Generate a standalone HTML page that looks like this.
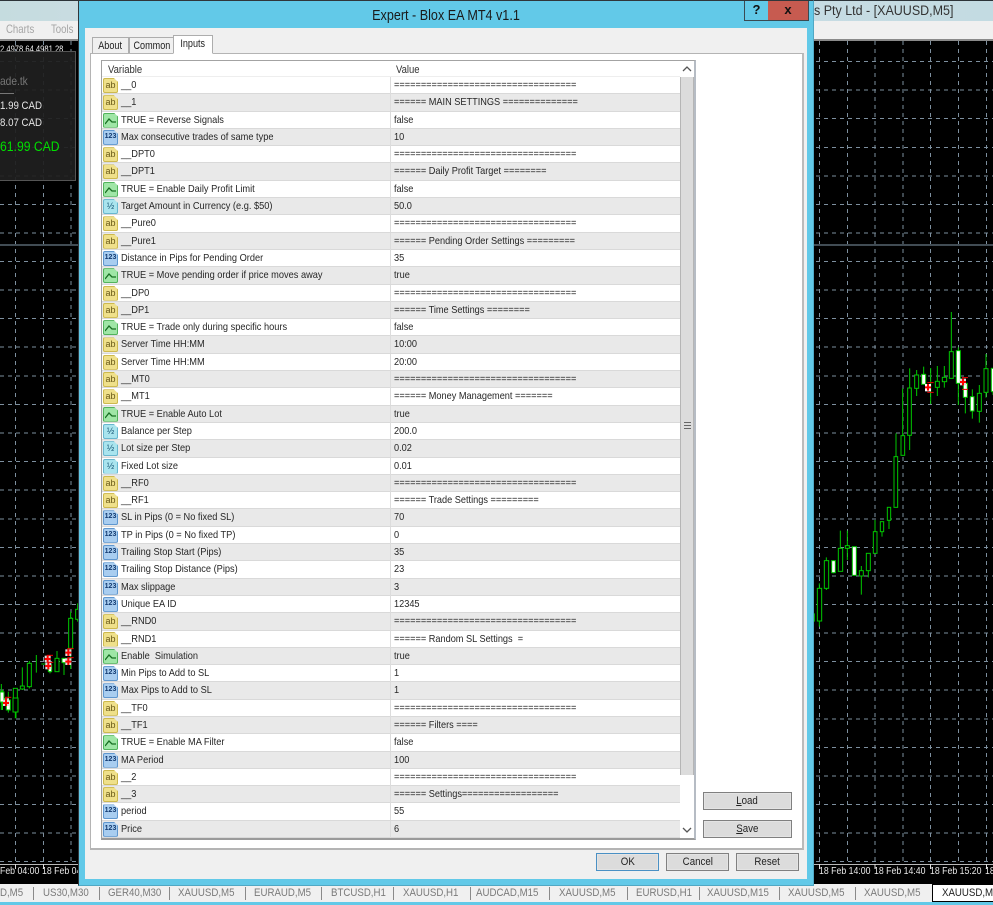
<!DOCTYPE html>
<html><head><meta charset="utf-8"><title>Expert - Blox EA MT4 v1.1</title>
<style>
*{box-sizing:border-box}
html,body{margin:0;padding:0}
body{width:993px;height:905px;position:relative;overflow:hidden;background:#000;font-family:"Liberation Sans",sans-serif;font-size:11px;color:#222}
.abs,.abs>*{position:absolute}
#bg{left:0;top:0}
#top{left:0;top:0;width:993px;height:21px;background:linear-gradient(90deg,#c5dcdf,#cfdde6 25%,#c3dbe2);border-top:1px solid #2c3338}
#menu{left:0;top:21px;width:993px;height:18px;background:#f0f0f0}
#ln{left:0;top:39px;width:993px;height:2px;background:#8a8a8a}
.tt{top:3px;left:814px;font-size:14.2px;color:#333;white-space:nowrap;transform:scaleX(.88);transform-origin:0 50%}
.mn{top:22px;font-size:12px;color:#a5a5a5;transform:scaleX(.8);transform-origin:0 50%}
#strip{left:0;top:884px;width:993px;height:18px;background:#f0f0f0}
#strip2{left:0;top:902px;width:993px;height:3px;background:#62c9e8}
.tb{top:886px;font-size:11.4px;line-height:14px;color:#7a7a7a;white-space:nowrap;transform:scaleX(.85);transform-origin:0 50%}
.sp{top:887px;width:1px;height:13px;background:#8a8a8a}
#act{left:932px;top:884px;width:61px;height:18px;background:#fff;border-left:1px solid #000;border-top:1px solid #000;border-bottom:1px solid #000;overflow:hidden;color:#222;font-size:11.4px;line-height:14px;padding:1px 0 0 9px;white-space:nowrap}
#act span{display:inline-block;transform:scaleX(.85);transform-origin:0 50%}
.ax{top:866px;font-size:10.4px;color:#e8e8e8;white-space:nowrap;transform:scaleX(.84);transform-origin:0 50%}
#hud{left:0;top:51px;width:76px;height:130px;background:rgba(31,31,31,.93);border:1px solid #555;border-left:0}
.h{white-space:nowrap;font-size:11.4px;color:#e6e6e6;left:0;transform:scaleX(.85);transform-origin:0 50%}
#dlg{left:78px;top:0;width:736px;height:886px;background:#62c9e8;border:1px solid #30363a;border-right:1px solid #50a8c4;border-bottom:1px solid #50a8c4}
#ttl{left:0;top:7px;width:734px;text-align:center;font-size:14.4px;color:#1a1a1a;transform:scaleX(.875)}
#help{left:665px;top:0;width:25px;height:20px;background:#62c9e8;border:1px solid #3a4a52;border-top:0;text-align:center;font:bold 13px/18px "Liberation Sans",sans-serif;color:#111}
#close{left:689px;top:0;width:41px;height:20px;background:#c75b50;border:1px solid #3a4a52;border-top:0;border-left:0;text-align:center;font:bold 13px/17px "Liberation Sans",sans-serif;color:#111}
#cl{left:6px;top:27px;width:722px;height:851px;background:#f0f0f0}
#pn{left:5px;top:25px;width:714px;height:797px;background:#fff;border:1px solid #b4b4b4;border-bottom:2px solid #b4b4b4;border-right:2px solid #bbb}
.tab{background:#f0f0f0;border:1px solid #adadad;border-bottom:0;text-align:center;font-size:10.8px;color:#222;line-height:16px}
.tab span{display:inline-block;transform:scaleX(.84)}
#lst{left:101px;top:60px;width:595px;height:780px;border:1px solid #a3a3a3;border-left:1px solid #a0a0a0;border-bottom:2px solid #9a9a9a;border-right:2px solid #b6bcc4;background:#fff;overflow:hidden}
#hd{height:16px;position:relative;font-size:10.8px;background:#fff;border-bottom:1px solid #eee;color:#333}
#hd span{position:absolute;top:3px;transform:scaleX(.88);transform-origin:0 50%}
.r{height:17.31px;position:relative;white-space:nowrap;font-size:10.45px;line-height:18px;color:#262626;border-bottom:1px solid #d9d9d9;width:579px}
.r:nth-child(even){background:#e9e9e9}
.r b{font-weight:400;position:absolute;left:19px;top:0;transform:scaleX(.885);transform-origin:0 50%}
.r u{text-decoration:none;position:absolute;left:292px;top:0;transform:scaleX(.88);transform-origin:0 50%}
.r:after{content:"";position:absolute;left:288px;top:0;width:1px;height:17px;background:#dcdcdc}
.r i{position:absolute;left:1px;top:1px;width:15px;height:15px;font-style:normal;font-size:9px;line-height:14px;text-align:center;clip-path:polygon(0 0,72% 0,100% 26%,100% 100%,0 100%);border-radius:2px}
.a{background:#efe08a;box-shadow:inset 0 0 0 1px #cdb94e;color:#6a5a18}
.n{background:#a8cdf0;box-shadow:inset 0 0 0 1px #5f97cf;color:#123a70;font-weight:700;font-size:7px!important}
.d{background:#a9e4ee;box-shadow:inset 0 0 0 1px #68b7cf;color:#1a5a78}
.t{background:#9fe6a6;box-shadow:inset 0 0 0 1px #52b35c}
.t svg{position:absolute;left:2px;top:3px}
#sb{left:680px;top:61px;width:14px;height:777px;background:#fff}
#sb>*{position:absolute}
.th{left:0;top:16px;width:14px;height:698px;background:#dcdcdc;border-left:1px solid #b5b5b5;border-right:1px solid #b5b5b5}
.gr{left:3px;top:345px;width:7px;height:7px;background:repeating-linear-gradient(#666 0 1px,#dcdcdc 1px 3px)}
.btn{background:#dcdcdc;border:1px solid #808080;text-align:center;font-size:10.8px;line-height:17px;color:#222;box-shadow:inset 0 0 0 1px #e4e4e4}
.btn span.s{display:inline-block;transform:scaleX(.9)}
</style></head>
<body>
<svg id="bg" class="abs" width="993" height="905" style="position:absolute;left:0;top:0">
<rect width="993" height="905" fill="#000"/>
<g stroke="#7d8f9e" stroke-width="1" stroke-dasharray="4 4" fill="none">
<path d="M0 61.5H993M0 90H993M0 118.5H993M0 147.5H993M0 176H993M0 204.5H993M0 233H993M0 261.5H993M0 290H993M0 318.5H993M0 347H993M0 376H993M0 404.5H993M0 433H993M0 461.5H993M0 490H993M0 519H993M0 547.5H993M0 576H993M0 604.5H993M0 633H993M0 661.5H993M0 690H993M0 719H993M0 747.5H993M0 776H993M0 804.5H993M0 833H993M0 861.5H993"/>
<path d="M15.5 41V864M43.5 41V864M71 41V864M819.5 41V864M847.5 41V864M875 41V864M903 41V864M930.5 41V864M958.5 41V864M986.5 41V864"/>
</g>
<rect x="0" y="244" width="993" height="2" fill="#414c54"/>
<rect x="0" y="864" width="993" height="1" fill="#b8b8b8"/>
<path d="M15.5 864v5M43.5 864v5M819.5 864v5M875 864v5M930.5 864v5M986.5 864v5" stroke="#ddd"/>
<g transform="translate(810,300) scale(.33333)" stroke="#00c800" stroke-width="3" fill="#000">
<path d="M13 940V965M28 850V980M49 772V870M70 780V820M91 692V814M112 692V780M133 740V826M154 798V884M175 760V832M195 660V760M216 665V710M237 622V687M258 400V622M278 265V466M299 205V450M320 210V288M341 200V253M362 204V312M382 198V288M403 198V263M424 36V235M445 142V315M466 250V340M487 268V356M508 255V368M528 162V293M549 205V285"/>
<rect x="22" y="865" width="13" height="98"/><rect x="43" y="782" width="13" height="83"/>
<rect x="65" y="782" width="11" height="36" fill="#fff"/><rect x="85" y="745" width="13" height="69"/>
<rect x="106" y="737" width="12" height="8"/><rect x="127" y="740" width="12" height="86" fill="#fff"/>
<rect x="148" y="812" width="12" height="16"/><rect x="169" y="760" width="12" height="52"/>
<rect x="190" y="695" width="11" height="65"/><rect x="211" y="665" width="10" height="30"/>
<rect x="232" y="622" width="10" height="39"/><rect x="252" y="470" width="11" height="152"/>
<rect x="273" y="407" width="11" height="59"/><rect x="293" y="264" width="11" height="142"/>
<rect x="314" y="225" width="12" height="40"/><rect x="335" y="223" width="12" height="30" fill="#fff"/>
<rect x="376" y="244" width="12" height="18"/><rect x="397" y="232" width="13" height="13"/>
<rect x="418" y="155" width="12" height="80"/><rect x="439" y="152" width="12" height="98" fill="#fff"/>
<rect x="460" y="250" width="12" height="42" fill="#fff"/><rect x="481" y="290" width="11" height="43" fill="#fff"/>
<rect x="502" y="280" width="12" height="54"/><rect x="522" y="206" width="12" height="71"/>
<rect x="544" y="205" width="12" height="70" fill="#fff"/>
</g>
<g transform="translate(810,300) scale(.33333)">
<rect x="345" y="252" width="18" height="22" fill="#fff"/><path d="M354 252V272M345 262H363" stroke="#f00" stroke-width="6"/>
<path d="M352 248H371M352 277H371" stroke="#e00" stroke-width="3"/>
<rect x="450" y="236" width="18" height="20" fill="#ddd"/><path d="M459 236V256M450 246H468" stroke="#f00" stroke-width="6"/>
<path d="M456 233H474M456 268H474" stroke="#e00" stroke-width="3"/>
</g>
<g transform="translate(0,590) scale(.33333)" stroke="#00c800" stroke-width="3" fill="#000">
<path d="M4 282V360M25 305V368M46 295V385M67 232V300M88 213V295M109 195V248M192 205V255M171 183V245M212 65V237M233 40V95M124 222H140M150 220V250"/>
<rect x="-2" y="305" width="12" height="23" fill="#fff"/><rect x="19" y="330" width="12" height="30" fill="#fff"/>
<rect x="40" y="295" width="12" height="65"/><rect x="61" y="288" width="12" height="9"/>
<rect x="82" y="220" width="12" height="70"/><rect x="145" y="225" width="10" height="20" fill="#fff"/>
<rect x="165" y="205" width="12" height="40"/><rect x="186" y="205" width="12" height="13" fill="#fff"/>
<rect x="206" y="85" width="12" height="90"/><rect x="227" y="58" width="10" height="30"/>
</g>
<g transform="translate(0,590) scale(.33333)">
<rect x="9" y="325" width="18" height="20" fill="#ddd"/><path d="M18 325V345M9 335H27" stroke="#f00" stroke-width="6"/><path d="M15 322H34" stroke="#e00" stroke-width="3"/>
<rect x="134" y="197" width="18" height="20" fill="#ddd"/><path d="M143 197V217M134 207H152" stroke="#f00" stroke-width="6"/><path d="M140 196H159" stroke="#e00" stroke-width="3"/>
<rect x="136" y="218" width="18" height="20" fill="#ddd"/><path d="M145 218V238M136 228H154" stroke="#f00" stroke-width="6"/><path d="M142 217H160" stroke="#e00" stroke-width="3"/>
<rect x="196" y="178" width="18" height="20" fill="#ddd"/><path d="M205 178V198M196 188H214" stroke="#f00" stroke-width="6"/><path d="M202 176H221" stroke="#e00" stroke-width="3"/>
<rect x="196" y="205" width="18" height="20" fill="#ddd"/><path d="M205 205V225M196 215H214" stroke="#f00" stroke-width="6"/><path d="M202 203H221" stroke="#e00" stroke-width="3"/>
</g>
<g transform="translate(0,690)" stroke="#00c800" fill="#000">
<path d="M2.5 0V20M16 8V28"/>
<rect x="0" y="2" width="4" height="10" fill="#fff"/><rect x="13" y="8" width="5" height="14"/>
<rect x="3" y="10" width="6" height="6" fill="#ddd" stroke="none"/><path d="M6 10V16M3 13H9" stroke="#f00" stroke-width="2"/>
</g>
</svg>

<div class="abs" style="left:0;top:0;width:993px;height:905px">
<div id="top"></div><div class="tt">s Pty Ltd - [XAUUSD,M5]</div>
<div id="menu"></div><div id="ln"></div>
<div class="mn" style="left:6px">Charts</div><div class="mn" style="left:51px">Tools</div>
<div style="left:0;top:44px;font-size:9.5px;color:#eee;white-space:nowrap;transform:scaleX(.8);transform-origin:0 50%">2 4978.64 4981.28</div>

<div id="hud"></div>
<div class="h" style="top:74px;color:#777;font-size:12px">ade.tk</div>
<div style="left:0;top:93px;width:14px;height:1px;background:#777"></div>
<div class="h" style="top:100px">1.99 CAD</div>
<div class="h" style="top:117px">8.07 CAD</div>
<div class="h" style="top:139px;font-size:13.4px;color:#00e000;transform:scaleX(.91)">61.99 CAD</div>

<div class="ax" style="left:0">Feb 04:00</div><div class="ax" style="left:42px">18 Feb 04</div>
<div class="ax" style="left:819px">18 Feb 14:00</div><div class="ax" style="left:874px">18 Feb 14:40</div><div class="ax" style="left:930px">18 Feb 15:20</div><div class="ax" style="left:985px">18</div>

<div id="strip"></div><div id="strip2"></div>
<div class="tb" style="left:0">D,M5</div><div class="sp" style="left:33px"></div>
<div class="tb" style="left:43px">US30,M30</div><div class="sp" style="left:99px"></div>
<div class="tb" style="left:108px">GER40,M30</div><div class="sp" style="left:169px"></div>
<div class="tb" style="left:178px">XAUUSD,M5</div><div class="sp" style="left:245px"></div>
<div class="tb" style="left:254px">EURAUD,M5</div><div class="sp" style="left:321px"></div>
<div class="tb" style="left:331px">BTCUSD,H1</div><div class="sp" style="left:393px"></div>
<div class="tb" style="left:403px">XAUUSD,H1</div><div class="sp" style="left:470px"></div>
<div class="tb" style="left:476px">AUDCAD,M15</div><div class="sp" style="left:549px"></div>
<div class="tb" style="left:559px">XAUUSD,M5</div><div class="sp" style="left:627px"></div>
<div class="tb" style="left:636px">EURUSD,H1</div><div class="sp" style="left:699px"></div>
<div class="tb" style="left:707px">XAUUSD,M15</div><div class="sp" style="left:779px"></div>
<div class="tb" style="left:788px">XAUUSD,M5</div><div class="sp" style="left:855px"></div>
<div class="tb" style="left:864px">XAUUSD,M5</div>
<div id="act"><span>XAUUSD,M5</span></div>

<div id="dlg" class="abs">
<div id="ttl">Expert - Blox EA MT4 v1.1</div>
<div id="help">?</div><div id="close">x</div>
<div id="cl" class="abs">
<div id="pn"></div>
<div class="tab" style="left:7px;top:9px;width:37px;height:16px"><span>About</span></div>
<div class="tab" style="left:44px;top:9px;width:45px;height:16px"><span>Common</span></div>
<div class="tab" style="left:88px;top:7px;width:40px;height:19px;background:#fff;line-height:16px;z-index:2;border-bottom:1px solid #fff"><span>Inputs</span></div>
</div>
</div>

<div id="lst">
<div id="hd"><span style="left:6px">Variable</span><span style="left:294px">Value</span></div>
<div id="rows">
<div class="r"><i class="a">ab</i><b>__0</b><u>==================================</u></div>
<div class="r"><i class="a">ab</i><b>__1</b><u>====== MAIN SETTINGS ==============</u></div>
<div class="r"><i class="t"><svg width="11" height="9"><path d="M0 8L4 3 7 6 11 6" stroke="#176f22" stroke-width="1.3" fill="none"/></svg></i><b>TRUE = Reverse Signals</b><u>false</u></div>
<div class="r"><i class="n">123</i><b>Max consecutive trades of same type</b><u>10</u></div>
<div class="r"><i class="a">ab</i><b>__DPT0</b><u>==================================</u></div>
<div class="r"><i class="a">ab</i><b>__DPT1</b><u>====== Daily Profit Target ========</u></div>
<div class="r"><i class="t"><svg width="11" height="9"><path d="M0 8L4 3 7 6 11 6" stroke="#176f22" stroke-width="1.3" fill="none"/></svg></i><b>TRUE = Enable Daily Profit Limit</b><u>false</u></div>
<div class="r"><i class="d">½</i><b>Target Amount in Currency (e.g. $50)</b><u>50.0</u></div>
<div class="r"><i class="a">ab</i><b>__Pure0</b><u>==================================</u></div>
<div class="r"><i class="a">ab</i><b>__Pure1</b><u>====== Pending Order Settings =========</u></div>
<div class="r"><i class="n">123</i><b>Distance in Pips for Pending Order</b><u>35</u></div>
<div class="r"><i class="t"><svg width="11" height="9"><path d="M0 8L4 3 7 6 11 6" stroke="#176f22" stroke-width="1.3" fill="none"/></svg></i><b>TRUE = Move pending order if price moves away</b><u>true</u></div>
<div class="r"><i class="a">ab</i><b>__DP0</b><u>==================================</u></div>
<div class="r"><i class="a">ab</i><b>__DP1</b><u>====== Time Settings ========</u></div>
<div class="r"><i class="t"><svg width="11" height="9"><path d="M0 8L4 3 7 6 11 6" stroke="#176f22" stroke-width="1.3" fill="none"/></svg></i><b>TRUE = Trade only during specific hours</b><u>false</u></div>
<div class="r"><i class="a">ab</i><b>Server Time HH:MM</b><u>10:00</u></div>
<div class="r"><i class="a">ab</i><b>Server Time HH:MM</b><u>20:00</u></div>
<div class="r"><i class="a">ab</i><b>__MT0</b><u>==================================</u></div>
<div class="r"><i class="a">ab</i><b>__MT1</b><u>====== Money Management =======</u></div>
<div class="r"><i class="t"><svg width="11" height="9"><path d="M0 8L4 3 7 6 11 6" stroke="#176f22" stroke-width="1.3" fill="none"/></svg></i><b>TRUE = Enable Auto Lot</b><u>true</u></div>
<div class="r"><i class="d">½</i><b>Balance per Step</b><u>200.0</u></div>
<div class="r"><i class="d">½</i><b>Lot size per Step</b><u>0.02</u></div>
<div class="r"><i class="d">½</i><b>Fixed Lot size</b><u>0.01</u></div>
<div class="r"><i class="a">ab</i><b>__RF0</b><u>==================================</u></div>
<div class="r"><i class="a">ab</i><b>__RF1</b><u>====== Trade Settings =========</u></div>
<div class="r"><i class="n">123</i><b>SL in Pips (0 = No fixed SL)</b><u>70</u></div>
<div class="r"><i class="n">123</i><b>TP in Pips (0 = No fixed TP)</b><u>0</u></div>
<div class="r"><i class="n">123</i><b>Trailing Stop Start (Pips)</b><u>35</u></div>
<div class="r"><i class="n">123</i><b>Trailing Stop Distance (Pips)</b><u>23</u></div>
<div class="r"><i class="n">123</i><b>Max slippage</b><u>3</u></div>
<div class="r"><i class="n">123</i><b>Unique EA ID</b><u>12345</u></div>
<div class="r"><i class="a">ab</i><b>__RND0</b><u>==================================</u></div>
<div class="r"><i class="a">ab</i><b>__RND1</b><u>====== Random SL Settings &nbsp;=</u></div>
<div class="r"><i class="t"><svg width="11" height="9"><path d="M0 8L4 3 7 6 11 6" stroke="#176f22" stroke-width="1.3" fill="none"/></svg></i><b>Enable &nbsp;Simulation</b><u>true</u></div>
<div class="r"><i class="n">123</i><b>Min Pips to Add to SL</b><u>1</u></div>
<div class="r"><i class="n">123</i><b>Max Pips to Add to SL</b><u>1</u></div>
<div class="r"><i class="a">ab</i><b>__TF0</b><u>==================================</u></div>
<div class="r"><i class="a">ab</i><b>__TF1</b><u>====== Filters ====</u></div>
<div class="r"><i class="t"><svg width="11" height="9"><path d="M0 8L4 3 7 6 11 6" stroke="#176f22" stroke-width="1.3" fill="none"/></svg></i><b>TRUE = Enable MA Filter</b><u>false</u></div>
<div class="r"><i class="n">123</i><b>MA Period</b><u>100</u></div>
<div class="r"><i class="a">ab</i><b>__2</b><u>==================================</u></div>
<div class="r"><i class="a">ab</i><b>__3</b><u>====== Settings==================</u></div>
<div class="r"><i class="n">123</i><b>period</b><u>55</u></div>
<div class="r"><i class="n">123</i><b>Price</b><u>6</u></div>
</div>
</div>

<div id="sb">
<svg style="left:2px;top:5px" width="10" height="6"><path d="M1 5L5 1 9 5" stroke="#555" stroke-width="1.3" fill="none"/></svg>
<div class="th"><div class="gr" style="position:absolute"></div></div>
<svg style="left:2px;top:766px" width="10" height="6"><path d="M1 1L5 5 9 1" stroke="#555" stroke-width="1.3" fill="none"/></svg>
</div>

<div class="btn" style="left:703px;top:792px;width:89px;height:18px"><span class="s"><span style="text-decoration:underline">L</span>oad</span></div>
<div class="btn" style="left:703px;top:820px;width:89px;height:18px"><span class="s"><span style="text-decoration:underline">S</span>ave</span></div>
<div class="btn" style="left:596px;top:853px;width:63px;height:18px;border-color:#4a90c4"><span class="s">OK</span></div>
<div class="btn" style="left:666px;top:853px;width:63px;height:18px"><span class="s">Cancel</span></div>
<div class="btn" style="left:736px;top:853px;width:63px;height:18px"><span class="s">Reset</span></div>
</div>
</body></html>
